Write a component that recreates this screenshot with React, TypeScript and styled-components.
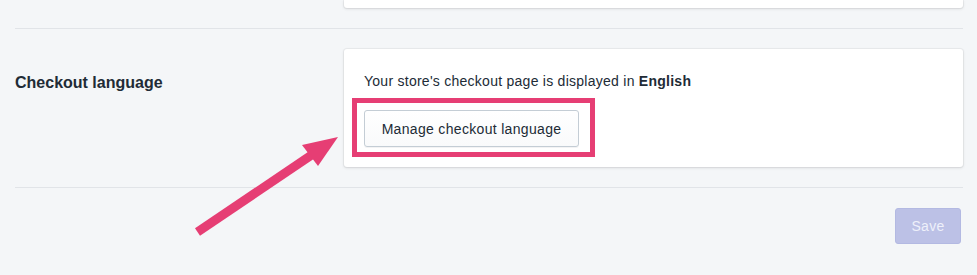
import styled, { createGlobalStyle } from "styled-components";

const GlobalStyle = createGlobalStyle`
  html, body {
    margin: 0;
    padding: 0;
    background: #f4f6f8;
  }
  body {
    font-family: "Liberation Sans", Arial, sans-serif;
    color: #212b36;
    -webkit-font-smoothing: antialiased;
  }
`;

const Page = styled.div`
  position: relative;
  width: 977px;
  height: 275px;
  overflow: hidden;
  padding: 0 14px 0 15px;
  box-sizing: border-box;
`;

const TopStub = styled.div`
  margin-left: 329px;
  height: 8px;
  background: #fff;
  border-radius: 0 0 3px 3px;
  box-shadow: 0 0 0 1px rgba(63, 63, 68, 0.05), 0 1px 3px 0 rgba(63, 63, 68, 0.15);
`;

const Section = styled.div`
  display: flex;
  margin-top: 20px;
  padding: 20px 0;
  border-top: 1px solid #e1e4e8;
`;

const TitleColumn = styled.div`
  width: 329px;
  flex-shrink: 0;
`;

const Title = styled.h2`
  margin: 0;
  padding-top: 22px;
  font-size: 16px;
  line-height: 24px;
  font-weight: 600;
  color: #212b36;
`;

const Card = styled.div`
  flex: 1;
  background: #fff;
  border-radius: 3px;
  padding: 22px 20px 20px;
  box-shadow: 0 0 0 1px rgba(63, 63, 68, 0.05), 0 1px 3px 0 rgba(63, 63, 68, 0.15);
`;

const Text = styled.p`
  margin: 0;
  font-size: 14px;
  line-height: 20px;
  letter-spacing: 0.26px;
  color: #212b36;

  strong {
    font-weight: 700;
  }
`;

const ButtonWrap = styled.div`
  position: relative;
  display: inline-block;
  margin-top: 19px;
`;

const Button = styled.button`
  display: block;
  width: 215px;
  height: 37px;
  padding: 0 16px;
  font-family: inherit;
  font-size: 14px;
  letter-spacing: 0.32px;
  color: #212b36;
  background: linear-gradient(180deg, #fff, #f9fafb);
  border: 1px solid #c4cdd5;
  border-radius: 3px;
  box-shadow: 0 1px 0 0 rgba(22, 29, 37, 0.05);
  cursor: pointer;
`;

const Highlight = styled.div`
  position: absolute;
  left: -12px;
  top: -12px;
  right: -16px;
  bottom: -10px;
  border: 5px solid #e63e74;
  pointer-events: none;
`;

const Footer = styled.div`
  display: flex;
  justify-content: flex-end;
  padding: 20px 2px 0 0;
  border-top: 1px solid #e1e4e8;
`;

const SaveButton = styled.button`
  width: 66px;
  height: 36px;
  font-family: inherit;
  font-size: 14px;
  letter-spacing: 0.3px;
  color: #eef0fa;
  background: #bcc1e6;
  border: 1px solid #b3b9e2;
  border-radius: 3px;
`;

const ArrowSvg = styled.svg`
  position: absolute;
  left: 185px;
  top: 125px;
  pointer-events: none;
`;

const Arrow = () => (
  <ArrowSvg width="160" height="120" viewBox="185 125 160 120">
    <line
      x1="197.5"
      y1="232"
      x2="316"
      y2="152"
      stroke="#e63e74"
      strokeWidth="9"
    />
    <polygon points="338,137 302,145 318,166" fill="#e63e74" />
  </ArrowSvg>
);

export default function App() {
  return (
    <>
      <GlobalStyle />
      <Page>
        <TopStub />
        <Section>
          <TitleColumn>
            <Title>Checkout language</Title>
          </TitleColumn>
          <Card>
            <Text>
              Your store's checkout page is displayed in <strong>English</strong>
            </Text>
            <ButtonWrap>
              <Button>Manage checkout language</Button>
              <Highlight />
            </ButtonWrap>
          </Card>
        </Section>
        <Footer>
          <SaveButton>Save</SaveButton>
        </Footer>
        <Arrow />
      </Page>
    </>
  );
}
